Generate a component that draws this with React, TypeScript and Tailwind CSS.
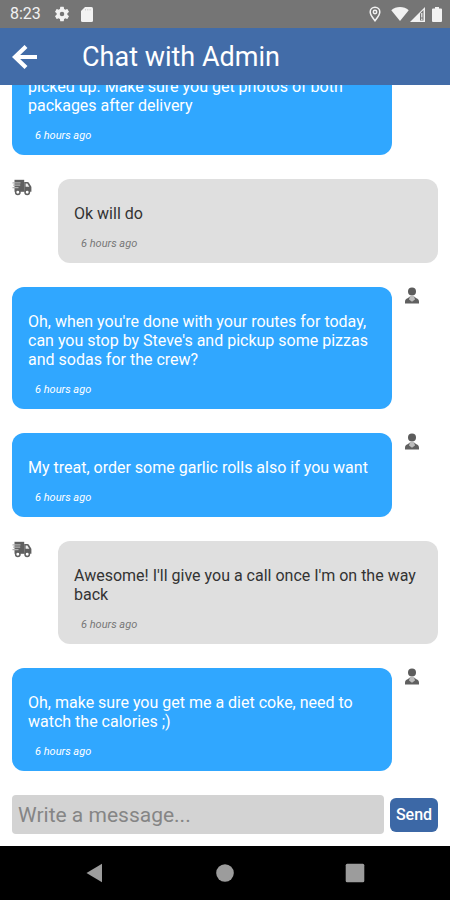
import { useState } from "react";

type Message = {
  id: number;
  from: "admin" | "driver";
  text: string;
  time: string;
};

const initialMessages: Message[] = [
  { id: 1, from: "admin", text: "picked up. Make sure you get photos of both packages after delivery", time: "6 hours ago" },
  { id: 2, from: "driver", text: "Ok will do", time: "6 hours ago" },
  {
    id: 3,
    from: "admin",
    text: "Oh, when you're done with your routes for today, can you stop by Steve's and pickup some pizzas and sodas for the crew?",
    time: "6 hours ago",
  },
  { id: 4, from: "admin", text: "My treat, order some garlic rolls also if you want", time: "6 hours ago" },
  { id: 5, from: "driver", text: "Awesome! I'll give you a call once I'm on the way back", time: "6 hours ago" },
  { id: 6, from: "admin", text: "Oh, make sure you get me a diet coke, need to watch the calories ;)", time: "6 hours ago" },
];

function StatusBar() {
  return (
    <div className="flex h-7 shrink-0 items-center justify-between bg-[#757575] pr-2 pl-[10px] text-[#f2f2f2]">
      <div className="flex items-center">
        <span className="text-base leading-7">8:23</span>
        {/* Settings */}
        <svg viewBox="0 0 24 24" className="ml-3 size-[18px]" fill="currentColor">
          <path d="M19.14 12.94c.04-.3.06-.61.06-.94 0-.32-.02-.64-.07-.94l2.03-1.58a.49.49 0 0 0 .12-.61l-1.92-3.32a.49.49 0 0 0-.59-.22l-2.39.96a7 7 0 0 0-1.62-.94l-.36-2.54a.48.48 0 0 0-.48-.41h-3.84a.48.48 0 0 0-.47.41l-.36 2.54c-.59.24-1.13.57-1.62.94l-2.39-.96a.48.48 0 0 0-.59.22L2.74 8.87a.47.47 0 0 0 .12.61l2.03 1.58a6 6 0 0 0-.02 1.88l-2.03 1.58a.49.49 0 0 0-.12.61l1.92 3.32c.12.22.37.29.59.22l2.39-.96c.5.38 1.03.7 1.62.94l.36 2.54c.05.24.24.41.48.41h3.84c.24 0 .44-.17.47-.41l.36-2.54a7 7 0 0 0 1.62-.94l2.39.96c.22.08.47 0 .59-.22l1.92-3.32a.47.47 0 0 0-.12-.61zM12 15a3 3 0 1 1 0-6 3 3 0 0 1 0 6z" />
        </svg>
        {/* SD card */}
        <svg viewBox="0 0 12 15" className="ml-[10px] h-[15px] w-3" fill="currentColor">
          <path d="M4 0h6.500A1.500 1.500 0 0 1 12 1.500v12a1.500 1.500 0 0 1-1.500 1.500h-9A1.500 1.500 0 0 1 0 13.500V4z" />
          <path d="M4.500 2v1.500M6.800 2v1.500M9.100 2v1.500" stroke="#d0d0d0" strokeWidth="1" />
        </svg>
      </div>
      <div className="flex items-center">
        {/* Location */}
        <svg viewBox="0 0 12 16" className="h-4 w-3" fill="none" stroke="currentColor" strokeWidth="1.500">
          <path d="M6 14.800C3.600 11.600 1.200 8.900 1.200 6a4.800 4.800 0 0 1 9.600 0c0 2.900-2.400 5.600-4.800 8.800z" />
          <circle cx="6" cy="6" r="1.700" />
        </svg>
        {/* Wifi */}
        <svg viewBox="0 0 18 14" className="ml-[10px] h-[14px] w-[18px]" fill="currentColor">
          <path d="M9 14 .3 3.200C2.700 1.200 5.700 0 9 0s6.300 1.200 8.700 3.200z" />
        </svg>
        {/* Signal */}
        <svg viewBox="0 0 15 15" className="ml-px size-[15px]">
          <path d="M0 15 15 0v15z" fill="currentColor" />
          <path d="M10 6.500 13.500 3v10.500H10z" fill="#757575" />
          <path d="M11.800 6v4.500M11.800 11.500v1.500" stroke="currentColor" strokeWidth="1.200" />
        </svg>
        {/* Battery */}
        <svg viewBox="0 0 10 15" className="ml-[7px] h-[15px] w-[10px]" fill="currentColor">
          <path d="M3 0h4v1.600h2a1 1 0 0 1 1 1V14a1 1 0 0 1-1 1H1a1 1 0 0 1-1-1V2.600a1 1 0 0 1 1-1h2z" />
        </svg>
      </div>
    </div>
  );
}

function Header() {
  return (
    <header className="flex h-[57px] shrink-0 items-center bg-[#426ca8] pl-3 text-white">
      <button type="button" aria-label="Back" className="w-[70px]">
        <svg viewBox="0 0 25 24" className="h-6 w-[25px]" fill="none" stroke="currentColor" strokeWidth="4.200">
          <path d="M14 1.500 3 12l11 10.500M3 12h22" />
        </svg>
      </button>
      <h1 className="text-[27px] leading-9">Chat with Admin</h1>
    </header>
  );
}

function AdminIcon() {
  return (
    <svg viewBox="0 0 16 17" className="h-[17px] w-4 shrink-0">
      <circle cx="8" cy="4.600" r="4" fill="#5c5c5c" />
      <path d="M1 16.500v-1.700c0-2 1-2.900 2.600-3.600L6 9.500h4l2.400 1.700c1.600.700 2.600 1.600 2.600 3.600v1.700z" fill="#606060" />
      <path d="M6 9.200h4l1 3.300-3 2.300-3-2.300z" fill="#bdbdbd" />
    </svg>
  );
}

function DriverIcon() {
  return (
    <svg viewBox="0 0 20 17" className="h-[17px] w-5 shrink-0">
      <path d="M2.500.800h9.700v12H2.500z" fill="#606060" />
      <path d="M12.200 3h3.300c.5 0 .9.200 1.200.600l2.400 3.600c.2.300.3.600.3 1v4.600h-7.200z" fill="#606060" />
      <path d="M13.600 4.500h1.700l2 3.200h-3.700z" fill="#f0f0f0" />
      {/* Speed lines running into the cargo box */}
      <path d="M.500 3.800h8M1.200 6.200h7M.500 8.600h6" stroke="#b0b0b0" strokeWidth="1.300" />
      <circle cx="5.800" cy="13.300" r="2.200" fill="#ffffff" stroke="#606060" strokeWidth="1.500" />
      <circle cx="15.200" cy="13.300" r="2.200" fill="#ffffff" stroke="#606060" strokeWidth="1.500" />
    </svg>
  );
}

function ChatMessage({ message }: { message: Message }) {
  const isAdmin = message.from === "admin";

  return (
    <li className={`flex shrink-0 items-start px-3 ${isAdmin ? "" : "flex-row-reverse"}`}>
      <div
        className={`min-w-0 flex-1 rounded-xl px-4 pt-[25px] pb-[11px] ${
          isAdmin ? "bg-[#30a7ff] text-white" : "bg-[#dfdfdf] text-[#333333]"
        }`}
      >
        <p className="text-base leading-[19px]">{message.text}</p>
        <p className={`mt-[13px] pl-[7px] text-[11px] leading-4 italic ${isAdmin ? "" : "text-[#777777]"}`}>
          {message.time}
        </p>
      </div>
      <div className={`flex w-[46px] shrink-0 ${isAdmin ? "pl-3" : ""}`}>
        {isAdmin ? <AdminIcon /> : <DriverIcon />}
      </div>
    </li>
  );
}

export default function App() {
  const [messages, setMessages] = useState(initialMessages);
  const [draft, setDraft] = useState("");

  const sendMessage = (e: React.FormEvent) => {
    e.preventDefault();
    if (!draft.trim()) return;
    setMessages([...messages, { id: messages.length + 1, from: "driver", text: draft, time: "just now" }]);
    setDraft("");
  };

  return (
    <div className="flex h-screen flex-col bg-white font-[Roboto,sans-serif]">
      <StatusBar />
      <Header />

      {/* Newest messages stay pinned to the bottom */}
      <ul className="flex min-h-0 flex-1 flex-col justify-end gap-6 overflow-hidden">
        {messages.map((message) => (
          <ChatMessage key={message.id} message={message} />
        ))}
      </ul>

      <form onSubmit={sendMessage} className="flex shrink-0 items-center gap-[6px] px-3 pt-6 pb-3">
        <input
          type="text"
          aria-label="Message"
          placeholder="Write a message..."
          value={draft}
          onChange={(e) => setDraft(e.target.value)}
          className="h-[39px] min-w-0 flex-1 rounded bg-[#d3d3d3] px-[6px] text-[21px] text-[#333333] outline-none placeholder:text-[#858585]"
        />
        <button type="submit" className="h-[34px] w-12 rounded-md bg-[#3c68a6] text-base font-medium text-white">
          Send
        </button>
      </form>

      {/* Android navigation */}
      <nav className="flex h-[54px] shrink-0 items-center justify-center gap-[110px] bg-black text-[#9c9c9c]">
        <button type="button" aria-label="Navigate back">
          <svg viewBox="0 0 20 20" className="size-5" fill="currentColor">
            <path d="M1.500 10 17 .800v18.400z" />
          </svg>
        </button>
        <button type="button" aria-label="Home">
          <svg viewBox="0 0 20 20" className="size-5" fill="currentColor">
            <circle cx="10" cy="10" r="8.800" />
          </svg>
        </button>
        <button type="button" aria-label="Recent apps">
          <svg viewBox="0 0 20 20" className="size-5" fill="currentColor">
            <rect x="0.700" y="0.700" width="18.600" height="18.600" rx="1.500" />
          </svg>
        </button>
      </nav>
    </div>
  );
}
